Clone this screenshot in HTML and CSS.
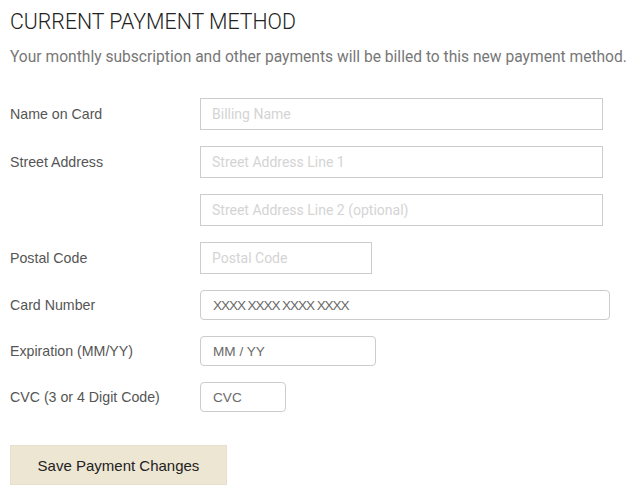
FILE: index.html
```html
<!DOCTYPE html>
<html lang="en">
<head>
  <meta charset="UTF-8">
  <title>Payment Method</title>
  <link rel="stylesheet" href="styles.css">
</head>
<body>
  <div class="page">
    <h1>CURRENT PAYMENT METHOD</h1>
    <p class="intro">Your monthly subscription and other payments will be billed to this new payment method.</p>
    <form class="pay-form">
      <label class="field-label">Name on Card</label>
      <input class="box box-full" type="text" placeholder="Billing Name">

      <label class="field-label">Street Address</label>
      <input class="box box-full" type="text" placeholder="Street Address Line 1">

      <span></span>
      <input class="box box-full" type="text" placeholder="Street Address Line 2 (optional)">

      <label class="field-label">Postal Code</label>
      <input class="box box-postal" type="text" placeholder="Postal Code">

      <label class="field-label">Card Number</label>
      <input class="box card box-card" type="text" placeholder="XXXX XXXX XXXX XXXX">

      <label class="field-label">Expiration (MM/YY)</label>
      <input class="box card box-exp" type="text" placeholder="MM / YY">

      <label class="field-label">CVC (3 or 4 Digit Code)</label>
      <input class="box card box-cvc" type="text" placeholder="CVC">
    </form>
    <button class="save" type="button">Save Payment Changes</button>
  </div>
</body>
</html>
```

FILE: styles.css
```css
body {
  margin: 0;
  background: #fff;
  font-family: "Liberation Sans", Arial, sans-serif;
}
.page {
  padding: 10px 10px;
}
h1 {
  margin: 0;
  font-family: Roboto, sans-serif;
  font-weight: 300;
  font-size: 21.3px;
  line-height: 24px;
  color: #222;
}
.intro {
  margin: 13px 0 0;
  font-family: Roboto, sans-serif;
  font-size: 15.6px;
  line-height: 20px;
  color: #777;
  white-space: nowrap;
}
.pay-form {
  display: grid;
  grid-template-columns: 190px auto;
  justify-items: start;
  align-items: center;
  row-gap: 16px;
  margin-top: 31px;
}
.field-label {
  font-size: 14.2px;
  color: #555;
}
.box {
  box-sizing: border-box;
  height: 32px;
  margin: 0;
  padding: 0 11px;
  border: 1px solid #ccc;
  border-radius: 0;
  font-family: Roboto, sans-serif;
  font-size: 14px;
  color: #333;
  outline: none;
}
.box::placeholder {
  color: #d4d4d4;
}
.box-full { width: 403px; }
.box-postal { width: 172px; }
.card {
  height: 30px;
  padding: 0 12px;
  border-radius: 4px;
  font-family: "Liberation Sans", Arial, sans-serif;
  font-size: 13.6px;
}
.card::placeholder {
  color: #6a6a6a;
}
.box-card {
  width: 410px;
  letter-spacing: -1.1px;
}
.box-exp { width: 176px; }
.box-cvc { width: 86px; }
.save {
  display: block;
  margin-top: 33px;
  width: 217px;
  height: 40px;
  border: 1px solid #e6dfca;
  background: #ede6d3;
  font-family: "Liberation Sans", Arial, sans-serif;
  font-size: 15px;
  color: #222;
  cursor: pointer;
}
```
